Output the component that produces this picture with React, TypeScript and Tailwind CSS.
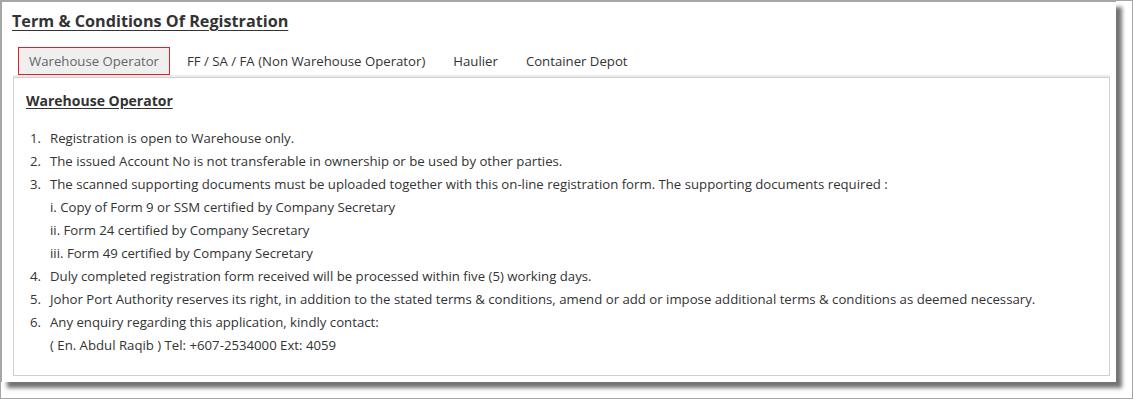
import React, { useState } from 'react';

const tabs = ['Warehouse Operator', 'FF / SA / FA (Non Warehouse Operator)', 'Haulier', 'Container Depot'];

const items: { n?: string; text: string }[] = [
  { n: '1.', text: 'Registration is open to Warehouse only.' },
  { n: '2.', text: 'The issued Account No is not transferable in ownership or be used by other parties.' },
  {
    n: '3.',
    text: 'The scanned supporting documents must be uploaded together with this on-line registration form. The supporting documents required :',
  },
  { text: 'i. Copy of Form 9 or SSM certified by Company Secretary' },
  { text: 'ii. Form 24 certified by Company Secretary' },
  { text: 'iii. Form 49 certified by Company Secretary' },
  { n: '4.', text: 'Duly completed registration form received will be processed within five (5) working days.' },
  {
    n: '5.',
    text: 'Johor Port Authority reserves its right, in addition to the stated terms & conditions, amend or add or impose additional terms & conditions as deemed necessary.',
  },
  { n: '6.', text: 'Any enquiry regarding this application, kindly contact:' },
  { text: '( En. Abdul Raqib ) Tel: +607-2534000 Ext: 4059' },
];

const App = () => {
  const [active, setActive] = useState(0);

  return (
    <div className="w-[1133px] h-[399px] border border-[#a6a6a6] bg-white font-['Open_Sans',sans-serif] text-[#333]">
      <div className="w-[1115px] h-[381px] border-t border-l border-[#a6a6a6] bg-white shadow-[6px_6px_4px_rgba(0,0,0,0.55)] pl-[11px]">
        <h1 className="pt-[7px] -ml-px text-[16.2px] leading-[24px] font-bold underline underline-offset-[3px]">
          Term &amp; Conditions Of Registration
        </h1>

        <div className="w-[1097px] mt-[14px]">
          <div className="flex h-[28px] pl-[5px] gap-[6px]">
            {tabs.map((t, i) => (
              <button
                key={t}
                onClick={() => setActive(i)}
                className={`h-[28px] px-[10px] text-[13.2px] leading-[26px] border ${
                  i === active ? 'bg-[#efefef] border-[#e2202c] text-[#666]' : 'border-transparent text-[#333]'
                }`}
              >
                {t}
              </button>
            ))}
          </div>
          <div className="h-[2px] bg-[#ececec]" />
          <div className="h-[299px] border border-[#d0d0d0] pl-[12px]">
            <h2 className="mt-[12px] text-[14px] leading-[22px] font-bold underline underline-offset-[2px]">
              Warehouse Operator
            </h2>
            <ol className="mt-[15px] text-[13.2px] leading-[23px]">
              {items.map((it, i) => (
                <li key={i} className="flex">
                  <span className="w-[24px] pl-[4px] shrink-0">{it.n}</span>
                  <span>{it.text}</span>
                </li>
              ))}
            </ol>
          </div>
        </div>
      </div>
    </div>
  );
};

export default App;
